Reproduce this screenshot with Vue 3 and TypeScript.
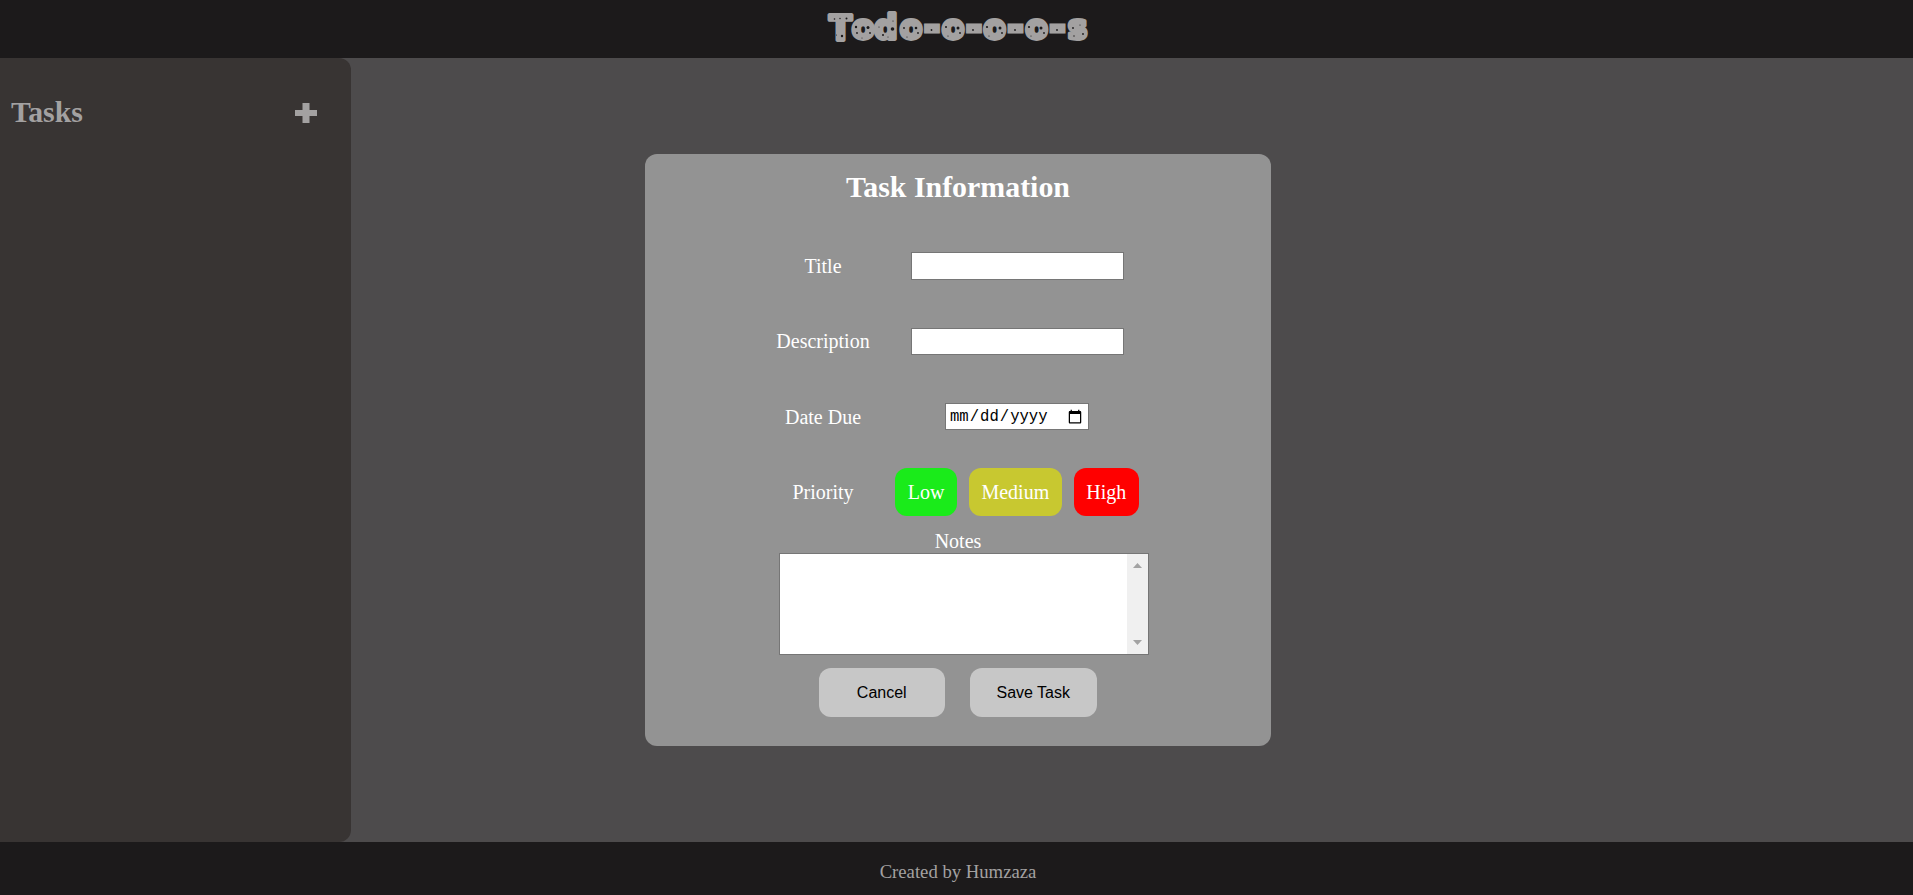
<script setup lang="ts">
import { ref } from 'vue'

interface Priority {
  label: string
  tone: string
}

const priorities: Priority[] = [
  { label: 'Low', tone: 'low' },
  { label: 'Medium', tone: 'medium' },
  { label: 'High', tone: 'high' },
]

const title = ref('')
const description = ref('')
const dueDate = ref('')
const notes = ref('')

// Horizontal centre and baseline of each wordmark letter
const letterCentres = [13.5, 36, 58.8, 84, 105, 126, 147, 167.5, 188.5, 209.5, 230.5, 250.5].join(' ')
const baselines = [26.7, 26.2, 26.2, 26.2, 25.7, 26.2, 25.7, 26.2, 25.7, 26.2, 25.7, 26.2].join(' ')
const letters = [...'Todo-o-o-o-s']

// Worn spots on the wordmark: x, y, radius
const specks: number[][] = [
  [7.5, 6, 0.8], [13, 5.5, 0.7], [19.5, 5.5, 1], [15, 23, 1.2], [9.5, 22, 0.5],
  [29, 14, 1.2], [41, 14.5, 1.5], [30, 20, 0.9], [43, 20, 0.9], [35, 25, 0.5],
  [65.5, 16, 1.8], [56, 22, 1], [52, 14, 0.6], [66, 8, 0.6], [61, 24, 0.5],
  [77, 15, 0.9], [89, 15, 1.3], [91, 20, 0.9], [80, 24, 0.6], [104.5, 17, 0.9],
  [119, 14, 1], [131, 15, 1.5], [133, 20, 0.9], [121, 23, 0.6], [146, 17, 0.9],
  [160, 14, 1.1], [173, 15, 1.5], [175, 20, 0.9], [162, 23, 0.6], [188, 17, 0.9],
  [202, 14, 1.1], [214, 15, 1.5], [217, 20, 0.9], [204, 23, 0.6], [230, 17, 0.9],
  [246, 15, 0.9], [253, 12, 0.6], [256, 21, 0.9], [247, 23, 0.7],
]
</script>

<template>
  <div class="page">
    <header class="header">
      <svg class="wordmark" width="264" height="45" viewBox="0 -13 264 45">
        <text :x="letterCentres" :y="baselines"><tspan v-for="(c, i) in letters" :key="i" :class="{ dash: c === '-' }">{{ c }}</tspan></text>
        <circle v-for="(s, i) in specks" :key="i" :cx="s[0]" :cy="s[1]" :r="s[2]" />
      </svg>
    </header>
    <div class="body">
      <aside class="sidebar">
        <h2>Tasks</h2>
        <svg class="add" width="22" height="20" viewBox="0 0 22 20">
          <path d="M7.5 0h7v7H22v6h-7.5v7h-7v-7H0V7h7.5z" />
        </svg>
      </aside>
    </div>
    <footer class="footer">Created by Humzaza</footer>

    <form class="card" @submit.prevent>
      <h2>Task Information</h2>
      <div class="fields">
        <label>Title</label>
        <input v-model="title" class="text" type="text" />
        <label>Description</label>
        <input v-model="description" class="text" type="text" />
        <label>Date Due</label>
        <input v-model="dueDate" class="date" type="date" />
        <label>Priority</label>
        <div class="priorities">
          <span v-for="p in priorities" :key="p.label" class="pill" :class="p.tone">{{ p.label }}</span>
        </div>
      </div>
      <label class="notes-label">Notes</label>
      <div class="notes">
        <textarea v-model="notes"></textarea>
        <div class="track">
          <svg width="9" height="5" viewBox="0 0 9 5"><path d="M0 5 4.5 0 9 5z" /></svg>
          <svg width="9" height="5" viewBox="0 0 9 5"><path d="M0 0 4.5 5 9 0z" /></svg>
        </div>
      </div>
      <div class="actions">
        <button type="button">Cancel</button>
        <button type="submit">Save Task</button>
      </div>
    </form>
  </div>
</template>

<style>
body {
  margin: 0;
  overflow: hidden;
}
</style>

<style scoped>
.page {
  position: relative;
  display: flex;
  flex-direction: column;
  height: 895px;
  background: #4d4b4c;
  font-family: "Liberation Serif", "Times New Roman", serif;
  color: #a3a1a1;
}
.header {
  flex: 0 0 58px;
  box-sizing: border-box;
  padding-left: 4px;
  display: flex;
  justify-content: center;
  align-items: flex-start;
  background: #1c1a1b;
}
.wordmark {
  overflow: visible;
}
.wordmark text {
  font: bold 33px "DejaVu Sans", sans-serif;
  text-anchor: middle;
  fill: #a3a1a1;
  stroke: #a3a1a1;
  stroke-width: 3.8px;
  stroke-linejoin: round;
}
.wordmark .dash {
  stroke-width: 5px;
  font-size: 36px;
  stroke-linejoin: miter;
}
.wordmark circle {
  fill: #1c1a1b;
}
.body {
  flex: 1;
  display: flex;
}
.sidebar {
  width: 351px;
  box-sizing: border-box;
  padding: 37px 34px 0 11px;
  display: flex;
  justify-content: space-between;
  align-items: flex-start;
  background: #383433;
  border-radius: 0 12px 12px 0;
}
.sidebar h2 {
  margin: 0;
  font-size: 29.8px;
  line-height: 34px;
}
.add {
  margin-top: 8px;
  fill: #a3a1a1;
}
.footer {
  flex: 0 0 53px;
  box-sizing: border-box;
  padding-top: 7px;
  padding-left: 3px;
  text-align: center;
  font-size: 18.7px;
  line-height: 45px;
  background: #1c1a1b;
}
.card {
  position: absolute;
  top: 154px;
  left: 645px;
  width: 626px;
  height: 592px;
  box-sizing: border-box;
  padding-top: 16px;
  display: flex;
  flex-direction: column;
  align-items: center;
  border-radius: 12px;
  background: #939393;
  color: #fff;
  font-size: 20px;
}
.card h2 {
  margin: 0;
  font-size: 29.9px;
  line-height: 34px;
}
.fields {
  margin-top: 24px;
  margin-right: 26px;
  display: grid;
  grid-template-columns: 144px 244px;
  grid-template-rows: repeat(4, 75.5px);
  align-items: center;
  justify-items: center;
}
.fields label {
  padding-top: 1px;
}
.text,
.date {
  box-sizing: border-box;
  height: 27px;
  border: 1px solid #767676;
  border-radius: 0;
  background: #fff;
  color: #000;
}
.text {
  width: 213px;
}
.text:first-of-type {
  height: 28px;
}
.date {
  width: 144px;
  padding: 1px 3px;
  font: 15.6px "Liberation Mono", monospace;
}
.priorities {
  display: flex;
  gap: 12px;
}
.pill {
  padding: 12px 12.5px;
  line-height: 24px;
  border-radius: 12px;
}
.low {
  background: #1aeb1a;
}
.medium {
  background: #c8c830;
}
.high {
  background: #f00;
}
.notes-label {
  line-height: 23px;
}
.notes {
  width: 370px;
  height: 102px;
  box-sizing: border-box;
  margin-left: 12px;
  display: flex;
  border: 1px solid #767676;
  background: #fff;
}
.notes textarea {
  flex: 1;
  min-width: 0;
  padding: 2px;
  border: 0;
  outline: 0;
  resize: none;
}
.track {
  width: 21px;
  box-sizing: border-box;
  padding: 9px 0;
  display: flex;
  flex-direction: column;
  justify-content: space-between;
  align-items: center;
  background: #f0f0f0;
}
.track svg {
  fill: #a3a3a3;
}
.actions {
  margin-top: 13px;
  margin-right: 1px;
  display: flex;
  gap: 25px;
}
.actions button {
  width: 126.5px;
  height: 49px;
  padding: 0;
  border: 0;
  border-radius: 12px;
  background: #c7c7c7;
  color: #000;
  font: 16px "Liberation Sans", Arial, sans-serif;
}
</style>
